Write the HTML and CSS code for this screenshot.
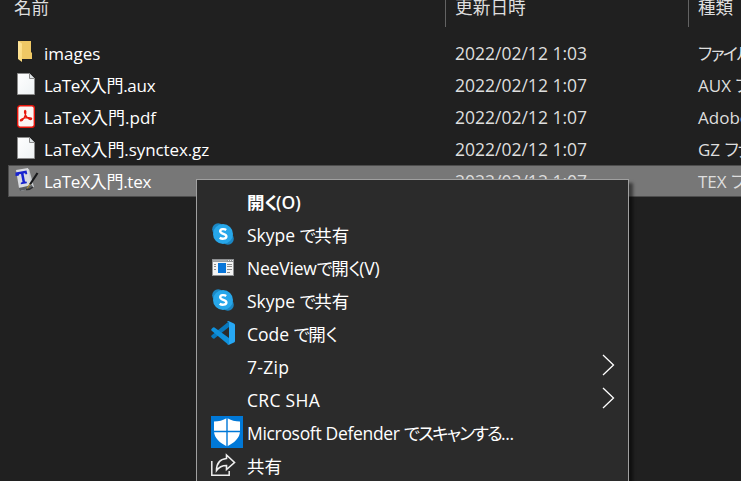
FILE: index.html
```
<!DOCTYPE html>
<html lang="ja">
<head>
<meta charset="utf-8">
<title>LaTeX入門</title>
<link rel="stylesheet" href="styles.css">
</head>
<body>
<svg class="defs" width="0" height="0" aria-hidden="true">
  <defs>
    <linearGradient id="folder-front" x2="1" y2="1"><stop stop-color="#ffe7a2"/><stop offset="1" stop-color="#fbd978"/></linearGradient>
    <linearGradient id="paper" x2="1" y2="1"><stop stop-color="#fff"/><stop offset="1" stop-color="#eef2f4"/></linearGradient>
    <symbol id="file" viewBox="0 0 18 22">
      <path d="M.5.5h12l5 5v16H.5z" fill="url(#paper)" stroke="#8b8b8b"/>
      <path d="M12.5.5v5h5" fill="#dfe5e8" stroke="#8b8b8b"/>
    </symbol>
    <symbol id="skype" viewBox="0 0 22 22">
      <circle cx="6.2" cy="6.2" r="6" fill="#1b87c4"/>
      <circle cx="15.8" cy="15.8" r="6" fill="#1b87c4"/>
      <circle cx="11" cy="11" r="10" fill="#27a7ea"/>
      <path d="M14.2 6.9C12.6 5.8 8.2 5.6 8.2 8.3c0 2.900 6.200 2.100 6.200 5 0 3-4.900 2.800-6.700 1.400" fill="none" stroke="#fff" stroke-width="2.400"/>
    </symbol>
    <symbol id="chevron" viewBox="0 0 13 22">
      <path d="M1 1l10.500 10L1 21" fill="none" stroke="#fff" stroke-width="1.300"/>
    </symbol>
  </defs>
</svg>
<main class="explorer">
  <header class="row header">
    <span class="name">名前</span><span class="date">更新日時</span><span class="type">種類</span>
  </header>
  <div class="row">
    <svg class="icon" viewBox="0 0 24 24"><path d="M4 0h13v11l1 1v6H8z" fill="#efc865"/><path d="M4 0l4 2.500V21l-4-3z" fill="url(#folder-front)"/></svg>
    <span class="name">images</span><span class="date">2022/02/12 1:03</span><span class="type"><span class="kana">ファイル</span></span>
  </div>
  <div class="row">
    <svg class="icon" viewBox="0 0 24 24"><use href="#file" x="3" y="0" width="18" height="22"/></svg>
    <span class="name tex">LaTeX入門.aux</span><span class="date">2022/02/12 1:07</span><span class="type">AUX <span class="kana">ファイル</span></span>
  </div>
  <div class="row">
    <svg class="icon" viewBox="0 0 24 24"><rect x="3.700" y=".7" width="16.600" height="21.600" rx="2.500" fill="#fbf5f3" stroke="#e8160c" stroke-width="1.400"/><path d="M6.700 15.800C8.500 16.500 12.500 10 11.800 6.300c-.6-1.700-1.900-.4-.9 2.300 1.300 3.700 4.800 6.800 6.500 5.600 1.500-1.900-5.700-2-9.200-.4-1.700.8-2.200 1.700-1.500 2z" fill="none" stroke="#e8160c" stroke-width="1.300"/></svg>
    <span class="name">LaTeX入門.pdf</span><span class="date">2022/02/12 1:07</span><span class="type">Adobe</span>
  </div>
  <div class="row">
    <svg class="icon" viewBox="0 0 24 24"><use href="#file" x="3" y="0" width="18" height="22"/></svg>
    <span class="name long">LaTeX入門.synctex.gz</span><span class="date">2022/02/12 1:07</span><span class="type">GZ <span class="kana">ファイル</span></span>
  </div>
  <div class="row selected">
    <svg class="icon" viewBox="0 0 24 24"><path d="M3 2l12-2 5 18-13 4z" fill="#c9cdd1"/><path d="M2 1l12-2 3 17L5 19z" fill="#d9dbe0"/><path d="M5 19l1 3 13-3-1-3z" fill="#5b5e62"/><path d="M1.500 7V3.500l11-2 .8 3.500-1.600.4-.7-1.200-1.500.3 1.500 8 1.800.2v1.500l-6 1v-1.500l1.700-.8-1.500-8-1.800.3-.6 1.500z" fill="#1723cf"/><path d="M23.500 4L16 15.500" stroke="#17181a" stroke-width="2.200"/><path d="M16 15l-3 4.500" stroke="#a78b32" stroke-width="1.300"/><path d="M12 20.500c3 .5 5-.7 7-2.500" fill="none" stroke="#303134" stroke-width="1.500"/></svg>
    <span class="name tex">LaTeX入門.tex</span><span class="date">2022/02/12 1:07</span><span class="type">TEX <span class="kana">ファイル</span></span>
  </div>
</main>
<nav class="menu">
  <div class="item default"><i class="slot"></i><span>開<span class="kana">く</span>(O)</span></div>
  <div class="item"><svg class="slot" viewBox="0 0 32 32"><use href="#skype" x="1" y="5" width="22" height="22"/></svg><span>Skype <span class="kana">で</span>共有</span></div>
  <div class="item"><svg class="slot" viewBox="0 0 32 32"><path d="M1 8h22v17H1z" fill="#8f9193"/><path d="M2 11h20v13H2z" fill="#f4f4f4"/><path d="M2 9h14v1.500H2z" fill="#a9abad"/><path d="M17 9.500h1m1 0h1m1 0h1" stroke="#e8e8e8"/><path d="M7 12h8v10H7z" fill="#0875d8"/><path d="M3 13.500h2m-2 2h2m-2 3h2M16 13.500h5m-5 2h5m-5 3h5m-5 3h3" stroke="#8c8c8c"/></svg><span class="neeview">NeeView<span class="kana">で</span>開<span class="kana">く</span>(V)</span></div>
  <div class="item"><svg class="slot" viewBox="0 0 32 32"><use href="#skype" x="1" y="5" width="22" height="22"/></svg><span>Skype <span class="kana">で</span>共有</span></div>
  <div class="item"><svg class="slot" viewBox="0 0 32 32"><g transform="translate(0 1)"><path d="M18 3.300V9L3.500 20.500Q2.500 21 1.700 20.200L.5 19q-.7-1 .2-1.800z" fill="#0878bd"/><path d="M18 26.700V20L3.500 9.500q-1-.6-1.800.2L.5 11q-.7 1 .2 1.800L16.500 26z" fill="#0f91dc"/><path d="M17.500 3l5.500 2.400q1 .5 1 1.600v16q0 1-1 1.600L17.500 27q-1 .3-1.500-.7 2 1 2-1V5q0-2-2-1 .4-1.100 1.500-1z" fill="#27a7f3"/></g></svg><span>Code <span class="kana">で</span>開<span class="kana">く</span></span></div>
  <div class="item"><i class="slot"></i><span class="wide">7-Zip</span><svg class="arrow"><use href="#chevron"/></svg></div>
  <div class="item"><i class="slot"></i><span class="wide">CRC SHA</span><svg class="arrow"><use href="#chevron"/></svg></div>
  <div class="item"><svg class="slot" viewBox="0 0 32 32"><path d="M0 0h32v32H0z" fill="#0078d7"/><path d="M3 5.500Q10 5.500 16 2q6 3.500 13 3.500V15c0 7-6 12-13 15.500C9 27 3 22 3 15z" fill="#fff"/><path d="M16 1v30M2 15.500h28" stroke="#0078d7" stroke-width="1.400"/></svg><span class="defender">Microsoft Defender <span class="kana">でスキャンする</span>...</span></div>
  <div class="item"><svg class="slot" viewBox="0 0 32 32"><g transform="translate(0 1)"><path d="M.8 11v14.200h17.400V21" fill="none" stroke="#eee" stroke-width="1.500"/><path d="M5.500 20.500C5.500 13 9.500 9 15.500 8.500V5l8 7.500-8 7v-4c-4.500 0-7.500 1.500-10 5z" fill="none" stroke="#eee" stroke-width="1.600"/></g></svg><span>共有</span></div>
</nav>
</body>
</html>
```
FILE: styles.css
```
* { box-sizing: border-box; }
body {
  margin: 0;
  width: 741px;
  height: 481px;
  overflow: hidden;
  position: relative;
  background: #202020;
  color: #dedede;
  font: 17px/33px "Open Sans", "Noto Sans CJK JP", sans-serif;
}
.defs { position: absolute; }
.explorer { display: flex; flex-direction: column; }
.row {
  display: grid;
  grid-template-columns: 30px 411px 243px 49px;
  width: 733px;
  height: 32px;
  margin-left: 8px;
  padding-left: 6px;
}
.header { height: 27px; margin-bottom: 10px; line-height: 14px; font-size: 17.5px; }
.header .name { grid-column: 1 / 3; color: #dedede; }
.header .date, .header .type { border-left: 1px solid #636363; margin-left: -10px; padding-left: 9px; }
.header .date { font-size: 17.7px; }
.icon { width: 24px; height: 24px; margin-top: 4px; overflow: visible; }
.name { color: #fff; white-space: nowrap; }
.date { font-size: 17.5px; white-space: nowrap; }
.type { white-space: nowrap; }
.tex { letter-spacing: -.27px; }
.long { letter-spacing: -.1px; }
.kana { font-feature-settings: "palt"; letter-spacing: -1.5px; }
.selected { background: #777; border: 1px solid #4d4d4d; border-right: 0; padding-left: 5px; line-height: 31px; }
.selected .icon { margin-top: 3px; }
.menu {
  position: absolute;
  left: 196px;
  top: 179px;
  width: 433px;
  height: 320px;
  padding: 6px 13px 6px 14px;
  background: #2b2b2b;
  border: 1px solid #a0a0a0;
  box-shadow: 4px 4px 3px rgba(0, 0, 0, .5);
  color: #fff;
  font-size: 17.5px;
  white-space: nowrap;
}
.item { display: flex; align-items: center; height: 33px; line-height: 33px; }
.slot { width: 32px; height: 32px; margin: -3px 4px 0 0; flex: none; }
.default { font-weight: 600; }
.neeview { letter-spacing: -.2px; }
.wide { letter-spacing: .3px; }
.defender { letter-spacing: -.32px; }
.defender .kana { letter-spacing: -1.8px; }
.arrow { width: 13px; height: 22px; margin: 0 0 5px auto; }
```
